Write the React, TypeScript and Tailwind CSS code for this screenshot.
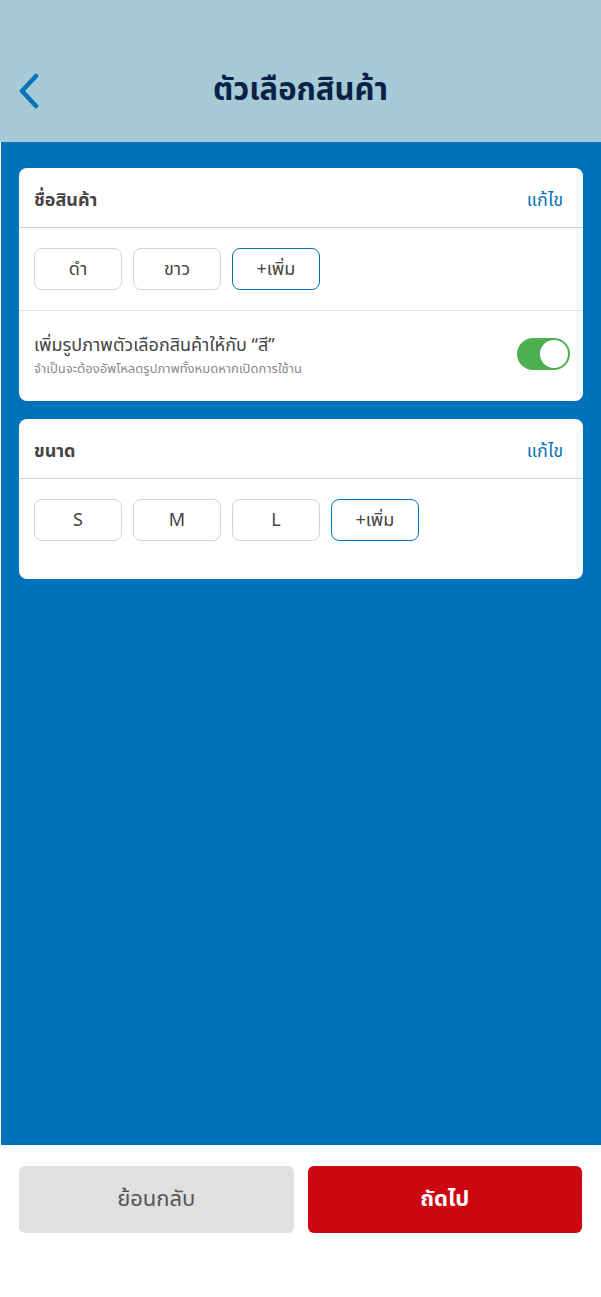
import React from "react";

const font = { fontFamily: '"Noto Sans Thai", "Noto Sans Thai UI", "Noto Sans", "Liberation Sans", sans-serif' };

function Chip({ label, accent }: { label: string; accent?: boolean }) {
  return (
    <div
      className={`w-[88px] h-[42px] rounded-[8px] border flex items-center justify-center text-[18px] text-[#444444] ${
        accent ? "border-[#0a72b9]" : "border-[#d4d4d4]"
      }`}
    >
      {label}
    </div>
  );
}

function CardHeader({ title }: { title: string }) {
  return (
    <div className="h-[60px] flex items-center justify-between pl-[15px] pr-[20px] pt-[6px] border-b border-[#d0d0d0]">
      <span className="text-[18px] font-bold text-[#444444]">{title}</span>
      <span className="text-[18px] text-[#0a72b9]">แก้ไข</span>
    </div>
  );
}

export default function App() {
  return (
    <div className="w-[601px] h-[1297px] flex flex-col bg-white" style={font}>
      <header className="h-[142px] bg-[#a6cbd6] flex items-end pb-[29px] relative shrink-0">
        <div className="w-full flex items-center justify-center relative h-[44px]">
          <svg className="absolute left-[17px] top-[4px]" width="24" height="36" viewBox="0 0 24 36" fill="none">
            <path d="M19 3 L5 18 L19 33" stroke="#0a72b9" strokeWidth="4.5" strokeLinecap="round" strokeLinejoin="round" />
          </svg>
          <h1 className="text-[31px] font-bold text-[#0b2148]">ตัวเลือกสินค้า</h1>
        </div>
      </header>
      <main className="h-[1003px] bg-[#0072bb] ml-[1px] px-[18px] pt-[26px] flex flex-col gap-[18px] shrink-0">
        <section className="bg-white rounded-[8px]">
          <CardHeader title="ชื่อสินค้า" />
          <div className="flex gap-[11px] px-[15px] pt-[20px] pb-[20px] border-b border-[#e0e0e0]">
            <Chip label="ดำ" />
            <Chip label="ขาว" />
            <Chip label="+เพิ่ม" accent />
          </div>
          <div className="flex items-center justify-between pl-[15px] pr-[13px] h-[90px]">
            <div className="flex flex-col">
              <span className="text-[18px] text-[#444444] leading-[26px]">เพิ่มรูปภาพตัวเลือกสินค้าให้กับ “สี”</span>
              <span className="text-[13px] text-[#8a8a8a] leading-[20px]">จำเป็นจะต้องอัพโหลดรูปภาพทั้งหมดหากเปิดการใช้าน</span>
            </div>
            <div className="w-[53px] h-[32px] mb-[5px] rounded-full bg-[#4caf50] flex items-center justify-end pr-[2px]">
              <div className="w-[28px] h-[28px] rounded-full bg-white" />
            </div>
          </div>
        </section>
        <section className="bg-white rounded-[8px] pb-[38px]">
          <CardHeader title="ขนาด" />
          <div className="flex gap-[11px] px-[15px] pt-[20px]">
            <Chip label="S" />
            <Chip label="M" />
            <Chip label="L" />
            <Chip label="+เพิ่ม" accent />
          </div>
        </section>
      </main>
      <footer className="flex gap-[14px] px-[19px] pt-[21px]">
        <button className="flex-1 h-[67px] rounded-[6px] bg-[#e0e0e0] text-[22px] text-[#555555]">ย้อนกลับ</button>
        <button className="flex-1 h-[67px] rounded-[6px] bg-[#cc0712] text-[22px] font-bold text-white">ถัดไป</button>
      </footer>
    </div>
  );
}
